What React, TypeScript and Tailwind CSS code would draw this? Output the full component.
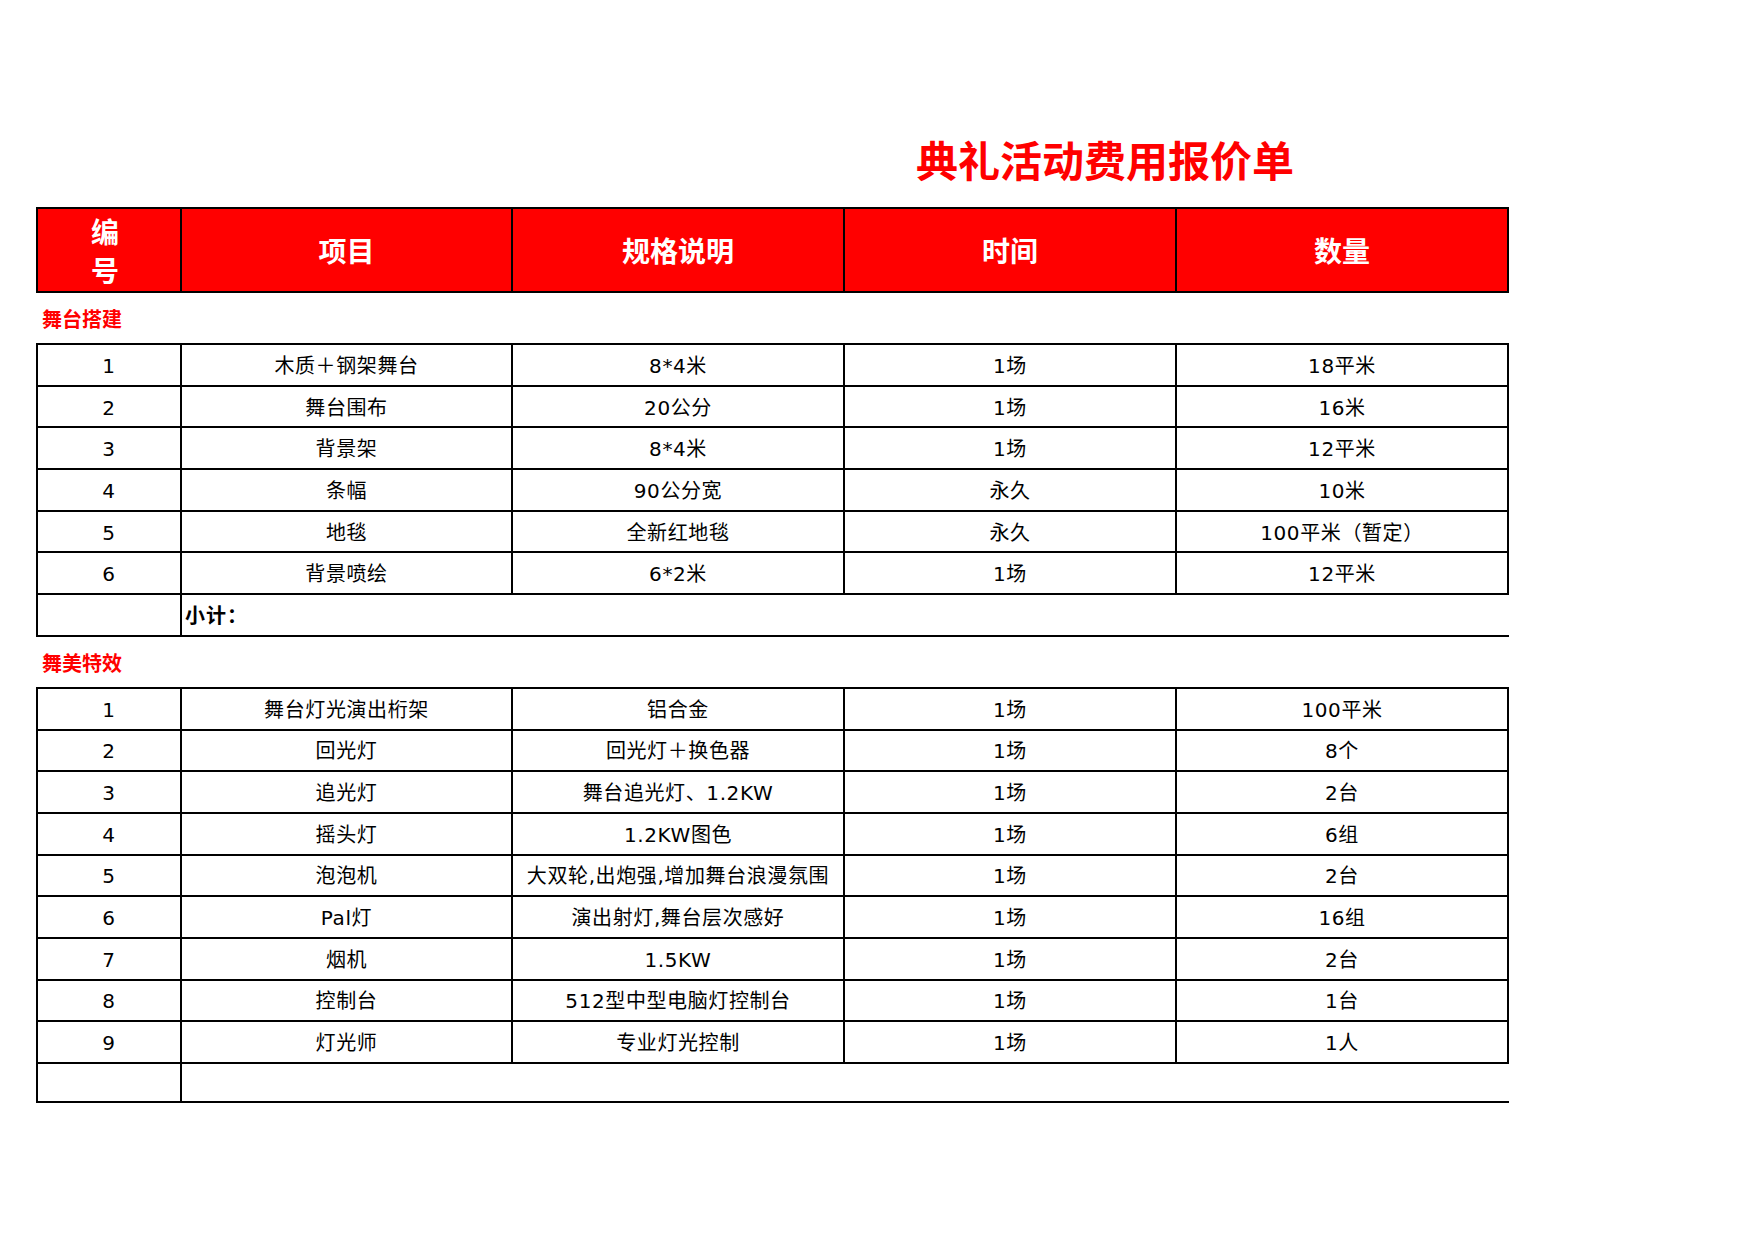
import React from 'react';

const cols = 'grid grid-cols-[146px_331px_332px_332px_332px]';

const stageRows = [
  ['1', '木质＋钢架舞台', '8*4米', '1场', '18平米'],
  ['2', '舞台围布', '20公分', '1场', '16米'],
  ['3', '背景架', '8*4米', '1场', '12平米'],
  ['4', '条幅', '90公分宽', '永久', '10米'],
  ['5', '地毯', '全新红地毯', '永久', '100平米（暂定）'],
  ['6', '背景喷绘', '6*2米', '1场', '12平米'],
];

const lightRows = [
  ['1', '舞台灯光演出桁架', '铝合金', '1场', '100平米'],
  ['2', '回光灯', '回光灯＋换色器', '1场', '8个'],
  ['3', '追光灯', '舞台追光灯、1.2KW', '1场', '2台'],
  ['4', '摇头灯', '1.2KW图色', '1场', '6组'],
  ['5', '泡泡机', '大双轮,出炮强,增加舞台浪漫氛围', '1场', '2台'],
  ['6', 'Pal灯', '演出射灯,舞台层次感好', '1场', '16组'],
  ['7', '烟机', '1.5KW', '1场', '2台'],
  ['8', '控制台', '512型中型电脑灯控制台', '1场', '1台'],
  ['9', '灯光师', '专业灯光控制', '1场', '1人'],
];

function DataRow({ cells }: { cells: string[] }) {
  return (
    <div className={`${cols} h-[41.7px] border-b-2 border-black`}>
      {cells.map((c, i) => (
        <div
          key={i}
          className={`flex items-center justify-center border-r-2 border-black pt-[2px] text-[20px] tracking-[0.6px] text-black ${
            i === 0 ? 'border-l-2' : ''
          }`}
        >
          {c}
        </div>
      ))}
    </div>
  );
}

function MergedRow({ label, height }: { label?: string; height: string }) {
  return (
    <div className={`grid grid-cols-[146px_1327px] ${height} border-b-2 border-black`}>
      <div className="border-l-2 border-r-2 border-black" />
      <div className="flex items-center pl-[3px] pt-[2px] text-[20px] font-bold tracking-[1px] text-black">{label}</div>
    </div>
  );
}

function SectionLabel({ text }: { text: string }) {
  return (
    <div className="flex h-[50px] items-center pl-[6px] pt-[4px] text-[20px] font-bold text-[#ff0000]">{text}</div>
  );
}

export default function App() {
  return (
    <div className="min-h-screen w-full bg-white pt-[138px] font-['DejaVu_Sans','Noto_Sans_CJK_SC',sans-serif]">
      <div className="w-[1509px] pl-[36px]">
        {/* 标题 */}
        <div className="mb-[19px] h-[50px] pl-[880px] text-[42px] font-bold leading-[50px] text-[#ff0000]">
          典礼活动费用报价单
        </div>

        {/* 表头 */}
        <div className={`${cols} h-[86px] border-y-2 border-black bg-[#ff0000] text-[28px] font-bold text-white`}>
          <div className="flex flex-col items-center justify-center border-l-2 border-r-2 border-black pr-2 pt-[5px] leading-[39px]">
            <span>编</span>
            <span>号</span>
          </div>
          <div className="flex items-center justify-center border-r-2 border-black pt-[5px]">项目</div>
          <div className="flex items-center justify-center border-r-2 border-black pt-[5px]">规格说明</div>
          <div className="flex items-center justify-center border-r-2 border-black pt-[5px]">时间</div>
          <div className="flex items-center justify-center border-r-2 border-black pt-[5px]">数量</div>
        </div>

        <SectionLabel text="舞台搭建" />
        <div className="border-t-2 border-black">
          {stageRows.map((r) => (
            <DataRow key={r[0]} cells={r} />
          ))}
          <MergedRow label="小计：" height="h-[41.7px]" />
        </div>

        <SectionLabel text="舞美特效" />
        <div className="border-t-2 border-black">
          {lightRows.map((r) => (
            <DataRow key={r[0]} cells={r} />
          ))}
          <MergedRow height="h-[39px]" />
        </div>
      </div>
    </div>
  );
}
